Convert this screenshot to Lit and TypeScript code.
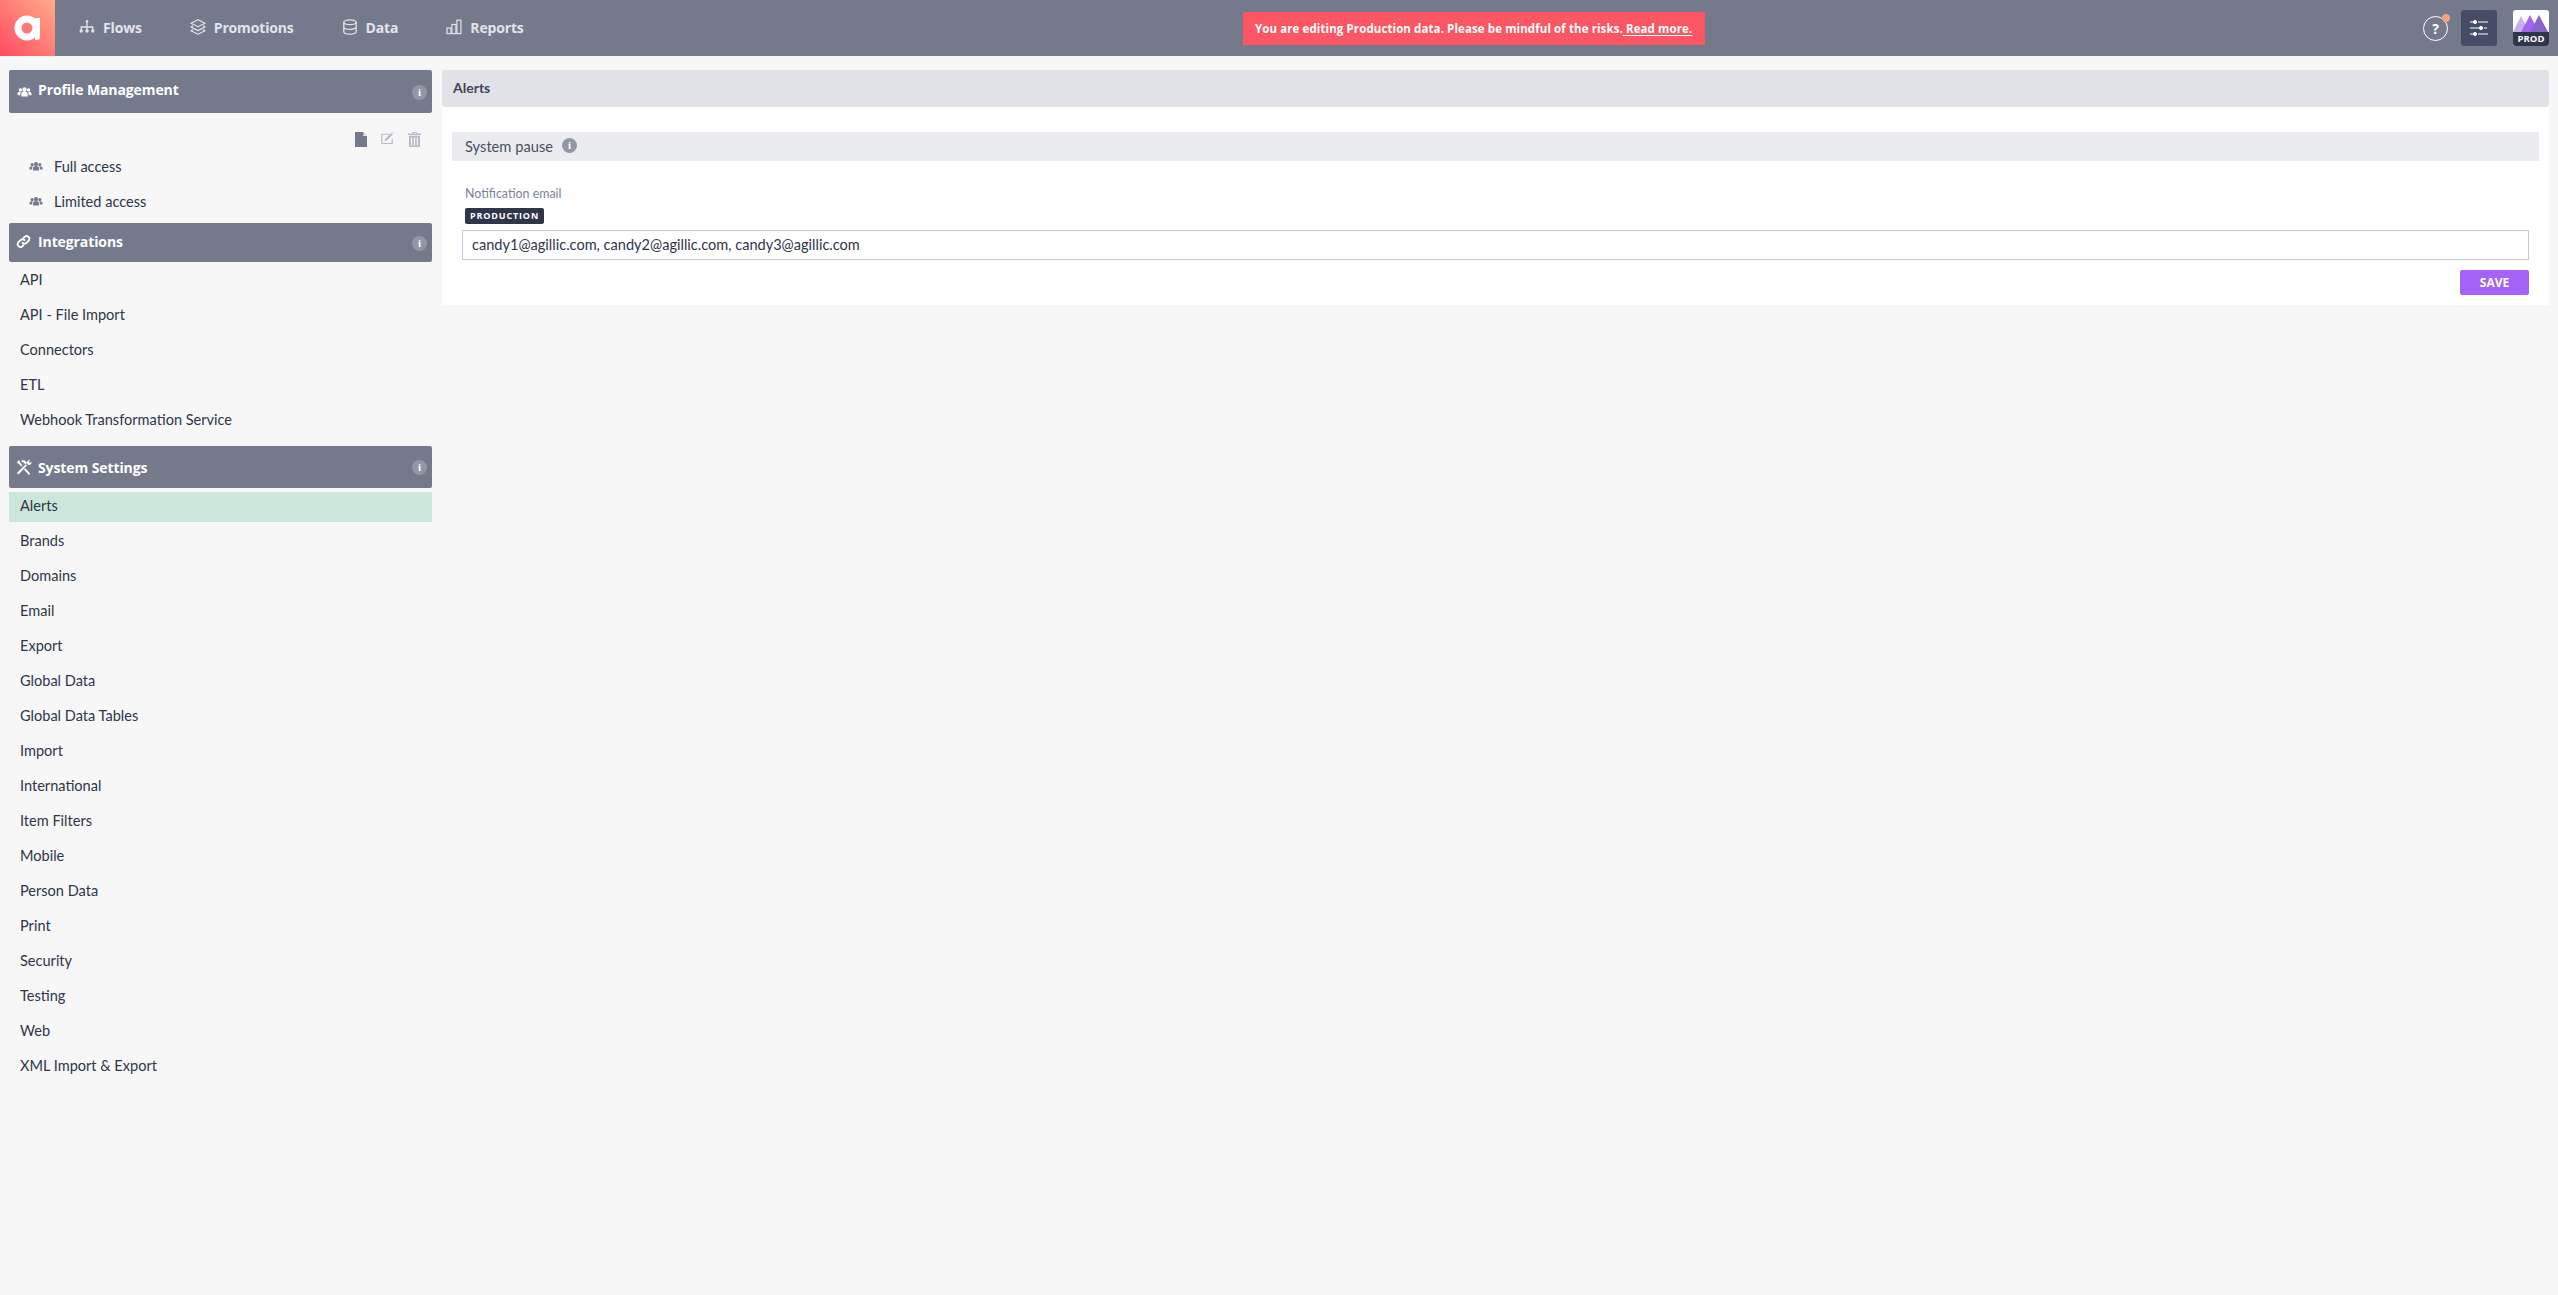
import { LitElement, html, css, svg } from "lit";
import { customElement } from "lit/decorators.js";

const users = svg`<path fill="currentColor" d="M8 2.6a2.5 2.5 0 1 1 0 5 2.5 2.5 0 0 1 0-5zM3.3 3.6a2 2 0 1 1 0 4 2 2 0 0 1 0-4zM12.7 3.6a2 2 0 1 1 0 4 2 2 0 0 1 0-4zM4.4 13V10.2c0-1.4.9-2.4 2-2.4h3.2c1.1 0 2 1 2 2.4V13zM0 11.8V9.8c0-1.1.7-1.8 1.6-1.8h2.3c-.4.6-.6 1.3-.6 2.1v1.7zM16 11.8V9.8c0-1.1-.7-1.8-1.6-1.8h-2.3c.4.6.6 1.3.6 2.1v1.7z"/>`;

const icons = {
  flows: svg`<g fill="none" stroke="currentColor" stroke-width="1.3"><path d="M8 2v6M2.2 11V8h11.6v3M8 8v3"/></g><g fill="currentColor"><circle cx="8" cy="2.4" r="1.3"/><circle cx="2.2" cy="12" r="1.7"/><circle cx="8" cy="12" r="1.7"/><circle cx="13.8" cy="12" r="1.7"/></g>`,
  layers: svg`<g fill="none" stroke="currentColor" stroke-width="1.2" stroke-linejoin="round"><path d="M8 .8l7 3.5-7 3.5-7-3.5z"/><path d="M3 6.8L1 8l7 3.6L15 8l-2-1.2"/><path d="M3 10.6l-2 1.1 7 3.5 7-3.5-2-1.1"/></g>`,
  db: svg`<g fill="none" stroke="currentColor" stroke-width="1.3"><ellipse cx="8" cy="3.2" rx="6.2" ry="2.4"/><path d="M1.8 3.2v9.6c0 1.3 2.8 2.4 6.2 2.4s6.2-1.1 6.2-2.4V3.2M1.8 8c0 1.3 2.8 2.4 6.2 2.4s6.2-1.1 6.2-2.4"/></g>`,
  chart: svg`<g fill="none" stroke="currentColor" stroke-width="1.2"><rect x="1" y="9" width="4" height="5.6"/><rect x="5.9" y="5.5" width="4" height="9.1"/><rect x="10.9" y="1.2" width="4" height="13.4"/></g>`,
  link: svg`<g fill="none" stroke="currentColor" stroke-width="2" stroke-linecap="round"><path d="M7 9.4a3 3 0 0 0 4.2 0l2.4-2.4a3 3 0 0 0-4.2-4.2L8.2 4"/><path d="M9 6.6a3 3 0 0 0-4.2 0L2.4 9a3 3 0 0 0 4.2 4.2L7.8 12"/></g>`,
  tools: svg`<g fill="currentColor"><path d="M1 14l8.6-8.8 1.4 1.4L2.5 15.4z"/><path d="M5.5 1.2l3 0 2.6 2.6-1.7 1.7L7.6 3.6 5.5 3z" /><path d="M5.3 7.6L1.8 4 .6 4.4 2.6 .9l1 1L4 3.4l2.6 2.7zM9.3 9.2l5 5.6-1.4 1.2-5-5.4z"/><path d="M15.6 2.4l-.2 2.2-1.6 1.4-1.9-.2L11 4.4l.2-2L13 .8l1 .3-1.2 1.4.6 1 1 .2z"/></g>`,
  file: svg`<path fill="currentColor" d="M0 0h8l4 4.2V15H0zM8.4 1v3h3z" fill-rule="evenodd"/>`,
  edit: svg`<g fill="none" stroke="currentColor" stroke-width="1.1"><path d="M11 6.5V11H1V2.2h7.2"/></g><path fill="currentColor" d="M4.2 6.6L10 .9l1.6 1.6L5.8 8.2l-2.2.6zM10.8.2l.9-.2.5.4-.2.9z"/>`,
  trash: svg`<path fill="currentColor" d="M4.5 0h4l.6 1.6H13V3H0V1.6h3.9zM5 .9l-.2.7h3.4L8 .9z" fill-rule="evenodd"/><path fill="currentColor" fill-rule="evenodd" d="M1 3.8h11V15H1zM3 5.4v8h1.2v-8zM5.9 5.4v8h1.2v-8zM8.8 5.4v8H10v-8z"/>`,
};

const ic = (p: unknown, w = 16, h = 16, vb = "0 0 16 16", cls = "") =>
  html`<svg class=${cls} width=${w} height=${h} viewBox=${vb} aria-hidden="true">${p}</svg>`;

const info = () => html`<span class="info">i</span>`;

const integrations = ["API", "API - File Import", "Connectors", "ETL", "Webhook Transformation Service"];
const settings = ["Alerts", "Brands", "Domains", "Email", "Export", "Global Data", "Global Data Tables", "Import", "International", "Item Filters", "Mobile", "Person Data", "Print", "Security", "Testing", "Web", "XML Import & Export"];

@customElement("app-root")
export class AppRoot extends LitElement {
  static styles = css`
    :host { display: block; min-height: 100vh; background: #f7f7f7; color: #2f3649; font-family: Lato, "Open Sans", sans-serif; font-size: 14.55px; }
    * { box-sizing: border-box; }
    .top { height: 56px; background: #747a8c; display: flex; align-items: center; font-family: "Open Sans", sans-serif; }
    .logo { width: 55px; height: 56px; background: linear-gradient(to top right, #ff4a62, #ffac88); display: flex; align-items: center; justify-content: center; }
    .nav { display: flex; gap: 48px; margin-left: 24px; padding-bottom: 2px; }
    .nav a { display: flex; align-items: center; gap: 8px; color: #e2e4ea; font-weight: 700; font-size: 14px; letter-spacing: -.16px; }
    .banner { margin-left: 719px; width: 462px; height: 33px; background: #fa5664; color: #fff; font-weight: 700; font-size: 11.5px; letter-spacing: .1px; display: flex; align-items: center; justify-content: center; white-space: pre; }
    .banner u { text-underline-offset: 2px; }
    .right { margin-left: auto; display: flex; align-items: center; padding-right: 9px; }
    .help { position: relative; width: 25px; height: 25px; border: 1.5px solid #fff; border-radius: 50%; color: #fff; font-weight: 700; font-size: 14px; display: flex; align-items: center; justify-content: center; margin-right: 13px; }
    .help::after { content: ""; position: absolute; width: 8px; height: 8px; border-radius: 50%; background: #f9a083; right: -3px; top: -3px; }
    .tune { width: 36px; height: 36px; border-radius: 3px; background: #454d66; display: flex; align-items: center; justify-content: center; margin-right: 16px; }
    .prod { width: 36px; height: 36px; border-radius: 3px; overflow: hidden; background: #fff; display: flex; flex-direction: column; }
    .prod svg { display: block; }
    .prod b { flex: 1; background: #2f3649; color: #fff; font-size: 9.5px; text-align: center; line-height: 13px; font-weight: 700; }
    .body { display: flex; align-items: flex-start; padding: 14px 9px 0; gap: 10px; }
    aside { width: 423px; flex: none; }
    .head { background: #747a8c; border-radius: 2px; color: #fff; font-family: "Open Sans", sans-serif; font-weight: 700; font-size: 14px; letter-spacing: -.1px; display: flex; align-items: center; position: relative; padding-left: 29px; }
    .head svg { position: absolute; left: 7px; }
    .info { width: 15px; height: 15px; border-radius: 50%; background: #9297a6; color: #fff; font: 700 11px/15px "Liberation Serif", serif; text-align: center; display: block; }
    .head .info { position: absolute; right: 5px; top: 50%; margin-top: -7px; }
    .h1 { height: 43px; padding-bottom: 5px; }
    .h1 svg { top: 15px; }
    .h2 { height: 39px; margin-top: 4px; padding-bottom: 2px; }
    .h3 { height: 42px; margin-top: 10px; }
    .tools { display: flex; justify-content: flex-end; align-items: flex-start; padding: 19px 11px 0 0; height: 36px; color: #747a8c; gap: 13px; }
    .tools .dim { color: #b9bcc8; }
    .prof { height: 35px; display: flex; align-items: center; gap: 10px; padding: 0 0 1px 19px; }
    .prof svg { color: #747a8c; }
    .list { padding-top: 4px; }
    .item { height: 30px; margin-bottom: 5px; display: flex; align-items: center; padding: 0 0 3px 11px; }
    .item.on { background: #cbe6da; }
    main { flex: 1; background: #fff; height: 235px; border-radius: 3px 3px 0 0; }
    .mh { height: 37px; background: #e1e2e7; border-radius: 3px; display: flex; align-items: center; padding-left: 11px; font-weight: 700; font-size: 14px; padding-bottom: 2px; color: #3f4558; }
    .card { padding: 25px 10px 0; }
    .sec { height: 29px; background: #ebecf0; display: flex; align-items: center; padding: 0 0 1px 13px; gap: 9px; color: #4a5062; font-size: 14.7px; }
    .sec .info { margin-top: -1px; }
    .form { padding: 26px 10px 0; }
    .lab { font-size: 12.4px; color: #7a8296; line-height: 14px; padding-left: 3px; }
    .badge { display: inline-block; margin: 7px 0 0 3px; background: #2f3649; color: #fff; height: 16px; width: 79px; border-radius: 2px; font-family: "Open Sans", sans-serif; font-size: 9px; font-weight: 700; letter-spacing: .85px; line-height: 16px; text-align: center; vertical-align: top; }
    .field { display: flex; align-items: center; margin-top: 6px; height: 30px; border: 1px solid #c8c8da; padding: 0 0 2px 9px; font-size: 14.55px; color: #2f3649; }
    .act { display: flex; justify-content: flex-end; margin-top: 10px; }
    .save { width: 69px; height: 25px; background: #a463f6; color: #fff; border-radius: 2px; font-family: "Open Sans", sans-serif; font-weight: 700; font-size: 12px; display: flex; align-items: center; justify-content: center; }
  `;

  render() {
    return html`
      <div class="top">
        <div class="logo">
          <svg width="28" height="26" viewBox="0 0 28 26" aria-hidden="true"><circle cx="13" cy="13" r="9" fill="none" stroke="#fff" stroke-width="7"/><path d="M21 3h5v19a3 3 0 0 1-3 3h-2z" fill="#fff"/></svg>
        </div>
        <nav class="nav">
          <a>${ic(icons.flows)}Flows</a>
          <a>${ic(icons.layers)}Promotions</a>
          <a>${ic(icons.db)}Data</a>
          <a>${ic(icons.chart)}Reports</a>
        </nav>
        <div class="banner">You are editing Production data. Please be mindful of the risks.<u> Read more.</u></div>
        <div class="right">
          <div class="help">?</div>
          <div class="tune">
            <svg width="20" height="16" viewBox="0 0 20 16" aria-hidden="true"><g stroke="#fff" stroke-width="1" fill="#fff"><path d="M1 2h3M9 2h10M1 8h9M15 8h3M1 14h3M9 14h10"/><circle cx="6" cy="2" r="1.6"/><circle cx="12" cy="8" r="1.6"/><circle cx="6" cy="14" r="1.6"/></g></svg>
          </div>
          <div class="prod">
            <svg width="36" height="22" viewBox="0 0 36 22" aria-hidden="true"><path d="M0 22L8 6l8 16z" fill="#c9aef0"/><path d="M8 22l9-17 9 17z" fill="#a463f6"/><path d="M17 22l9-17 9 17z" fill="#8a64c8"/></svg>
            <b>PROD</b>
          </div>
        </div>
      </div>
      <div class="body">
        <aside>
          <div class="head h1">${ic(users, 17, 14)}Profile Management${info()}</div>
          <div class="tools">
            ${ic(icons.file, 12, 15, "0 0 12 15")}
            ${ic(icons.edit, 15, 12, "0 0 13 11.5", "dim")}
            ${ic(icons.trash, 13, 15, "0 0 13 15", "dim")}
          </div>
          <div class="prof">${ic(users, 16, 13)}Full access</div>
          <div class="prof">${ic(users, 16, 13)}Limited access</div>
          <div class="head h2">${ic(icons.link, 15, 15)}Integrations${info()}</div>
          <div class="list">${integrations.map((t) => html`<div class="item">${t}</div>`)}</div>
          <div class="head h3">${ic(icons.tools, 16, 16)}System Settings${info()}</div>
          <div class="list">${settings.map((t) => html`<div class="item ${t === "Alerts" ? "on" : ""}">${t}</div>`)}</div>
        </aside>
        <main>
          <div class="mh">Alerts</div>
          <div class="card">
            <div class="sec">System pause${info()}</div>
            <div class="form">
              <div class="lab">Notification email</div>
              <span class="badge">PRODUCTION</span>
              <div class="field">candy1@agillic.com, candy2@agillic.com, candy3@agillic.com</div>
              <div class="act"><div class="save">SAVE</div></div>
            </div>
          </div>
        </main>
      </div>
    `;
  }
}
